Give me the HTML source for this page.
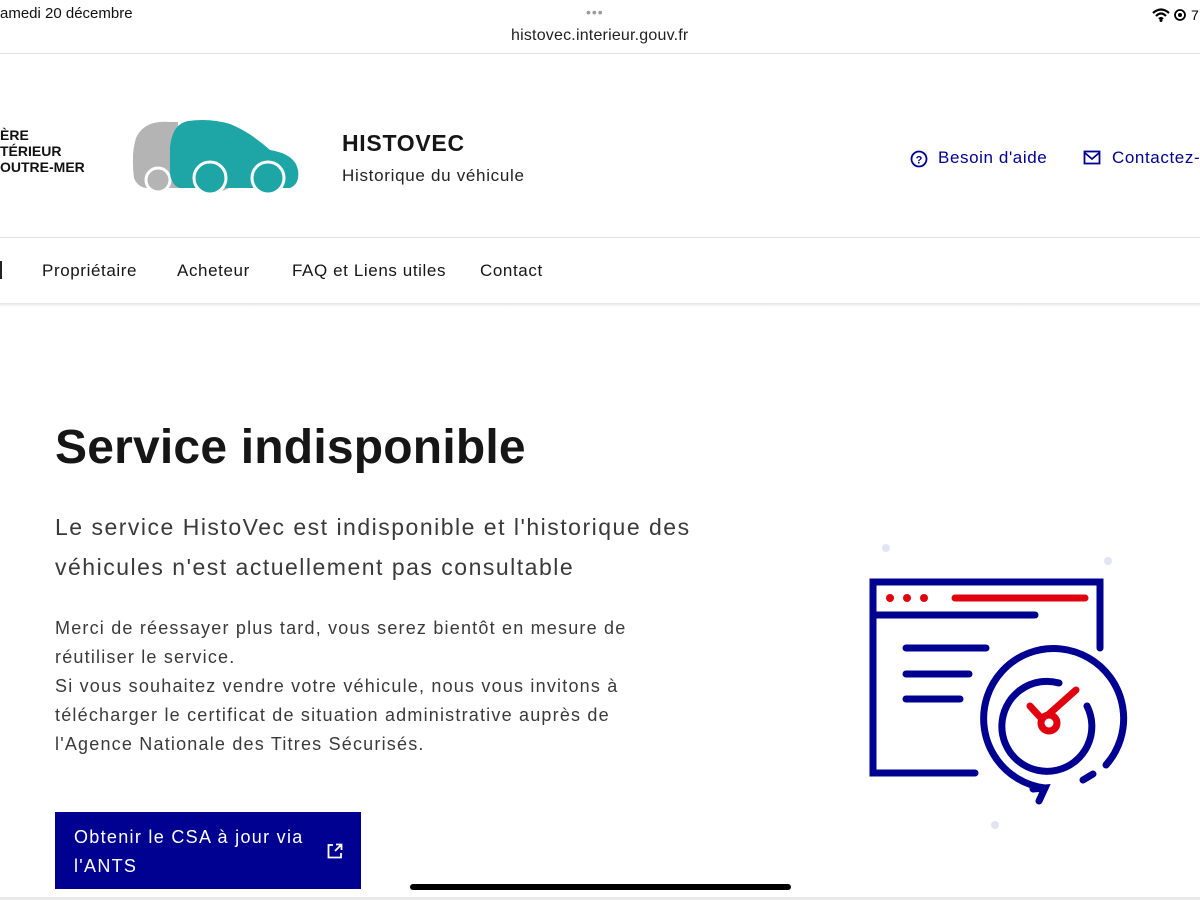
<!DOCTYPE html>
<html><head><meta charset="utf-8"><style>
*{margin:0;padding:0;box-sizing:border-box}
body{width:1200px;height:900px;overflow:hidden;background:#fff;font-family:"Liberation Sans",sans-serif;color:#161616;position:relative}
.a{position:absolute;white-space:nowrap}
.nav{font-size:17px;letter-spacing:0.6px}
</style></head><body>
<div class="a" style="left:0;top:5px;font-size:15px;color:#111">amedi 20 décembre</div>
<div class="a" style="left:586px;top:4px;font-size:14px;color:#999;letter-spacing:1px">•••</div>
<div class="a" style="left:511px;top:27px;font-size:16px;color:#222;letter-spacing:0.2px">histovec.interieur.gouv.fr</div>
<svg class="a" style="left:1152px;top:7px" width="48" height="16"><path d="M1 6 Q9 -1 17 6 M4 9 Q9 4 14 9 M7 12 Q9 10 11 12" stroke="#000" stroke-width="2.2" fill="none"/><circle cx="9" cy="13.5" r="1.5"/><circle cx="28" cy="8" r="5" stroke="#000" stroke-width="1.8" fill="none"/><circle cx="28" cy="8" r="2"/><text x="39" y="13" font-size="14" font-family="Liberation Sans">7</text></svg>
<div class="a" style="left:0;top:53px;width:1200px;height:1px;background:#ddd"></div>

<div class="a" style="left:0;top:127px;font-size:14px;font-weight:bold;line-height:16px;color:#111">ÈRE<br>TÉRIEUR<br>OUTRE-MER</div>
<svg class="a" style="left:130px;top:118px" width="175" height="80">
<path d="M40 4 Q14 2 6 20 Q1 36 4 60 Q8 70 18 70 L50 70 L48 4Z" fill="#b4b4b4"/>
<circle cx="28" cy="62" r="12" fill="#b4b4b4" stroke="#fff" stroke-width="3"/>
<circle cx="92" cy="62" r="12" fill="#b4b4b4" stroke="#fff" stroke-width="3"/>
<path d="M58 3 Q80 0 100 6 Q120 14 140 32 Q165 36 168 52 Q170 66 160 70 L50 70 Q42 68 40 56 L40 30 Q42 6 58 3Z" fill="#1ea6a6"/>
<circle cx="80" cy="60" r="16" fill="#1ea6a6" stroke="#fff" stroke-width="3"/>
<circle cx="138" cy="60" r="16" fill="#1ea6a6" stroke="#fff" stroke-width="3"/>
</svg>
<div class="a" style="left:342px;top:130px;font-size:23px;font-weight:bold;letter-spacing:0.7px">HISTOVEC</div>
<div class="a" style="left:342px;top:166px;font-size:17px;color:#222;letter-spacing:0.7px">Historique du véhicule</div>
<svg class="a" style="left:909px;top:149px" width="20" height="20"><circle cx="10" cy="10" r="7.5" stroke="#000091" stroke-width="1.8" fill="none"/><text x="10" y="14.5" font-size="11" text-anchor="middle" fill="#000091" font-weight="bold" font-family="Liberation Sans">?</text></svg>
<div class="a" style="left:938px;top:148px;font-size:17px;color:#000091;letter-spacing:0.6px">Besoin d'aide</div>
<svg class="a" style="left:1083px;top:150px" width="20" height="16"><rect x="1.5" y="1.5" width="15" height="12" stroke="#000091" stroke-width="1.8" fill="none"/><path d="M2 3 L9 9 L16 3" stroke="#000091" stroke-width="1.8" fill="none"/></svg>
<div class="a" style="left:1112px;top:148px;font-size:17px;color:#000091;letter-spacing:0.6px">Contactez-</div>

<div class="a" style="left:0;top:237px;width:1200px;height:1px;background:#ddd"></div>
<div class="a" style="left:0;top:261px;width:2px;height:18px;background:#222"></div>
<div class="a nav" style="left:42px;top:261px">Propriétaire</div>
<div class="a nav" style="left:177px;top:261px">Acheteur</div>
<div class="a nav" style="left:292px;top:261px">FAQ et Liens utiles</div>
<div class="a nav" style="left:480px;top:261px">Contact</div>
<div class="a" style="left:0;top:303px;width:1200px;height:4px;background:linear-gradient(#e4e4e4,#fff)"></div>

<div class="a" style="left:55px;top:420px;font-size:48px;font-weight:bold;color:#161616;letter-spacing:0.2px">Service indisponible</div>
<div class="a" style="left:55px;top:507px;font-size:23px;line-height:40px;color:#3a3a3a;letter-spacing:1.5px">Le service HistoVec est indisponible et l'historique des<br>véhicules n'est actuellement pas consultable</div>
<div class="a" style="left:55px;top:614px;font-size:18px;line-height:29px;color:#3a3a3a;letter-spacing:1.2px">Merci de réessayer plus tard, vous serez bientôt en mesure de<br>réutiliser le service.<br>Si vous souhaitez vendre votre véhicule, nous vous invitons à<br>télécharger le certificat de situation administrative auprès de<br>l'Agence Nationale des Titres Sécurisés.</div>

<div class="a" style="left:55px;top:812px;width:306px;height:77px;background:#000091"></div>
<div class="a" style="left:74px;top:823px;font-size:18px;line-height:29px;color:#fff;letter-spacing:1.3px">Obtenir le CSA à jour via<br>l'ANTS</div>
<svg class="a" style="left:326px;top:842px" width="18" height="18"><path d="M7 3 H2.5 V15.5 H15 V11 M9 9 L15.5 2.5 M10 2.5 H15.5 V8" stroke="#fff" stroke-width="1.8" fill="none"/></svg>

<svg class="a" style="left:0;top:0" width="1200" height="900">
<g fill="#e3e3f4"><circle cx="886" cy="548" r="4"/><circle cx="1108" cy="561" r="4"/><circle cx="995" cy="825" r="4"/></g>
<g stroke="#000091" stroke-width="7" stroke-linecap="round" fill="none">
<path d="M1100 648 V582 H873 V773 H975"/>
<path d="M873 615 H1035"/>
<path d="M906 648 H986 M906 674 H969 M906 699 H960"/>
<path d="M1045 788 A70 70 0 1 1 1106 765"/>
<path d="M1033 789 L1045 788 L1039 801"/>
<path d="M1083 780 L1093 774"/>
<path d="M1059 683 A45 45 0 1 0 1087 706"/>
</g>
<g stroke="#e1000f" stroke-width="7" stroke-linecap="round" fill="none">
<path d="M955 598 H1085"/>
<path d="M1049 714 L1076 690 M1040 717 L1030 706"/>
<circle cx="1049" cy="723" r="8"/>
</g>
<g fill="#e1000f"><circle cx="890" cy="598" r="4"/><circle cx="907" cy="598" r="4"/><circle cx="924" cy="598" r="4"/></g>
</svg>

<div class="a" style="left:410px;top:884px;width:381px;height:6px;border-radius:3px;background:#000"></div>
<div class="a" style="left:0;top:897px;width:1200px;height:3px;background:#e8e8e8"></div>
</body></html>
